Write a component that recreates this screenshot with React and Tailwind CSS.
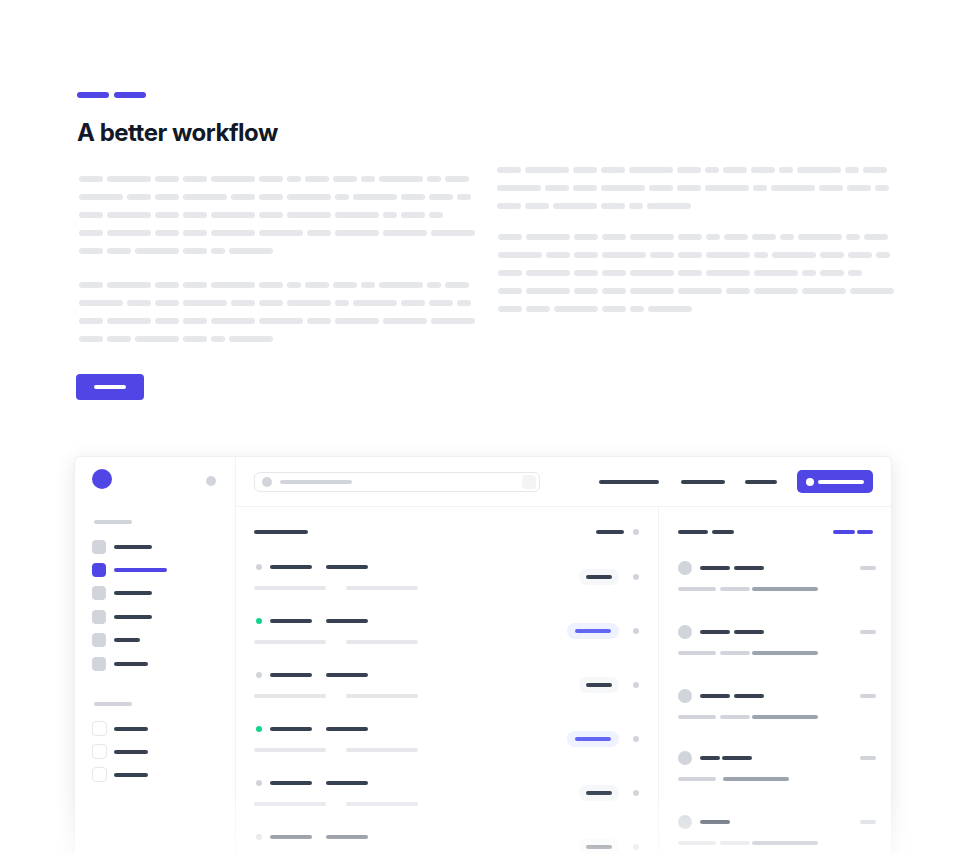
// Feature section: heading, skeleton copy and an app preview card.

const W = { 14: 'w-[14px]', 24: 'w-[24px]', 44: 'w-[44px]' }

const LINES = {
  a: [24, 44, 24, 24, 44, 24, 14, 24, 24, 14, 44, 14, 24],
  b: [44, 24, 24, 44, 24, 24, 44, 14, 44, 24, 24, 14],
  c: [24, 44, 24, 24, 44, 24, 44, 44, 14, 24, 14],
  d: [24, 44, 24, 24, 44, 44, 24, 44, 44, 44],
  e: [24, 24, 44, 24, 14, 44],
}

function Paragraph({ rows }) {
  return (
    <div className="flex flex-col gap-[12px]">
      {rows.map((r, i) => (
        <div key={i} className="flex gap-[4px]">
          {LINES[r].map((w, j) => (
            <span key={j} className={`${W[w]} h-[6px] rounded-full bg-[#e5e7eb]`} />
          ))}
        </div>
      ))}
    </div>
  )
}

const NAV = [
  { bar: 'w-[38px]' },
  { bar: 'w-[53px]', active: true },
  { bar: 'w-[38px]' },
  { bar: 'w-[38px]' },
  { bar: 'w-[26px]' },
  { bar: 'w-[34px]' },
]

function Sidebar() {
  return (
    <div className="w-[161px] shrink-0 border-r border-[#f1f2f4] pl-[17px] pr-[19px] pt-[12px]">
      <div className="flex items-start justify-between">
        <span className="size-[20px] rounded-full bg-[#4f46e5]" />
        <span className="mt-[7px] size-[10px] rounded-full bg-[#d1d5db]" />
      </div>

      <div className="ml-[2px] mt-[31px] h-[4px] w-[38px] rounded-full bg-[#d1d5db]" />
      <div className="mt-[11px] flex flex-col">
        {NAV.map((n, i) => (
          <div key={i} className="flex h-[23.4px] items-center gap-[8px]">
            <span className={n.active ? 'size-[14px] rounded-[4px] bg-[#4f46e5]' : 'size-[14px] rounded-[4px] bg-[#d1d5db]'} />
            <span className={`${n.bar} h-[4px] rounded-full ${n.active ? 'bg-[#4f46e5]' : 'bg-[#374151]'}`} />
          </div>
        ))}
      </div>

      <div className="ml-[2px] mt-[27px] h-[4px] w-[38px] rounded-full bg-[#d1d5db]" />
      <div className="mt-[11px] flex flex-col">
        {[0, 1, 2].map((i) => (
          <div key={i} className="flex h-[23px] items-center gap-[7px]">
            <span className="size-[15px] rounded-[4px] border-[1.5px] border-[#e5e7eb]" />
            <span className="h-[4px] w-[34px] rounded-full bg-[#374151]" />
          </div>
        ))}
      </div>
    </div>
  )
}

function Header() {
  return (
    <div className="flex h-[50px] shrink-0 items-center border-b border-[#f1f2f4] pl-[18px] pr-[18px]">
      <div className="flex h-[20px] w-[286px] items-center rounded-[6px] border border-[#e5e7eb] pl-[7px] pr-[3px]">
        <span className="size-[10px] rounded-full bg-[#d1d5db]" />
        <span className="ml-[8px] h-[4px] w-[72px] rounded-full bg-[#d1d5db]" />
        <span className="ml-auto size-[14px] rounded-[4px] bg-[#f3f4f6]" />
      </div>
      <div className="ml-auto flex items-center">
        <span className="h-[4px] w-[60px] rounded-full bg-[#374151]" />
        <span className="ml-[22px] h-[4px] w-[44px] rounded-full bg-[#374151]" />
        <span className="ml-[20px] h-[4px] w-[32px] rounded-full bg-[#374151]" />
        <div className="ml-[20px] flex h-[23px] w-[76px] items-center rounded-[5px] bg-[#4f46e5] pl-[9px]">
          <span className="size-[8px] rounded-full bg-white" />
          <span className="ml-[4px] h-[4px] w-[46px] rounded-full bg-white" />
        </div>
      </div>
    </div>
  )
}

const ROWS = [false, true, false, true, false, false]

function ListRow({ live }) {
  return (
    <div className="flex items-center justify-between">
      <div className="flex flex-col">
        <div className="flex h-[6px] items-center">
          <span className={live ? 'ml-[2px] size-[6px] rounded-full bg-[#10d48e]' : 'ml-[2px] size-[6px] rounded-full bg-[#d1d5db]'} />
          <span className="ml-[8px] h-[4px] w-[42px] rounded-full bg-[#374151]" />
          <span className="ml-[14px] h-[4px] w-[42px] rounded-full bg-[#374151]" />
        </div>
        <div className="mt-[16px] flex gap-[20px]">
          <span className="h-[4px] w-[72px] rounded-full bg-[#e5e7eb]" />
          <span className="h-[4px] w-[72px] rounded-full bg-[#e5e7eb]" />
        </div>
      </div>
      <div className="flex items-center gap-[14px]">
        {live ? (
          <div className="flex h-[16px] items-center rounded-full bg-[#eef2ff] px-[8px]">
            <span className="h-[4px] w-[36px] rounded-full bg-[#6366f1]" />
          </div>
        ) : (
          <div className="flex h-[16px] items-center rounded-full bg-[#f6f7f9] px-[7px]">
            <span className="h-[4px] w-[26px] rounded-full bg-[#374151]" />
          </div>
        )}
        <span className="size-[6px] rounded-full bg-[#d1d5db]" />
      </div>
    </div>
  )
}

function List() {
  return (
    <div className="w-[423px] shrink-0 border-r border-[#f1f2f4] pl-[18px] pr-[19px] pt-[22px]">
      <div className="flex h-[6px] items-center justify-between">
        <span className="h-[4px] w-[54px] rounded-full bg-[#374151]" />
        <div className="flex items-center gap-[9px]">
          <span className="h-[4px] w-[28px] rounded-full bg-[#374151]" />
          <span className="size-[6px] rounded-full bg-[#d1d5db]" />
        </div>
      </div>
      <div className="mt-[29px] flex flex-col gap-[28px]">
        {ROWS.map((live, i) => (
          <ListRow key={i} live={live} />
        ))}
      </div>
    </div>
  )
}

function Activity({ kind }) {
  return (
    <div className="flex flex-col">
      <div className="flex h-[14px] items-center">
        <span className="size-[14px] rounded-full bg-[#d1d5db]" />
        {kind === 'short' && (
          <>
            <span className="ml-[8px] h-[4px] w-[20px] rounded-full bg-[#374151]" />
            <span className="ml-[2px] h-[4px] w-[30px] rounded-full bg-[#374151]" />
          </>
        )}
        {kind === 'single' && <span className="ml-[8px] h-[4px] w-[30px] rounded-full bg-[#374151]" />}
        {!kind && (
          <>
            <span className="ml-[8px] h-[4px] w-[30px] rounded-full bg-[#374151]" />
            <span className="ml-[4px] h-[4px] w-[30px] rounded-full bg-[#374151]" />
          </>
        )}
        <span className="-mr-[3px] ml-auto h-[4px] w-[16px] rounded-full bg-[#d1d5db]" />
      </div>
      <div className="mt-[12px] flex">
        <span className="h-[4px] w-[38px] rounded-full bg-[#d1d5db]" />
        {kind === 'short' ? (
          <span className="ml-[7px] h-[4px] w-[66px] rounded-full bg-[#9ca3af]" />
        ) : (
          <>
            <span className="ml-[4px] h-[4px] w-[30px] rounded-full bg-[#d1d5db]" />
            <span className="ml-[2px] h-[4px] w-[66px] rounded-full bg-[#9ca3af]" />
          </>
        )}
      </div>
    </div>
  )
}

function Panel() {
  return (
    <div className="flex-1 pl-[19px] pr-[18px] pt-[22px]">
      <div className="flex h-[6px] items-center justify-between">
        <div className="flex gap-[4px]">
          <span className="h-[4px] w-[30px] rounded-full bg-[#374151]" />
          <span className="h-[4px] w-[22px] rounded-full bg-[#374151]" />
        </div>
        <div className="flex gap-[2px]">
          <span className="h-[4px] w-[22px] rounded-full bg-[#4f46e5]" />
          <span className="h-[4px] w-[16px] rounded-full bg-[#4f46e5]" />
        </div>
      </div>
      <div className="mt-[26px] flex flex-col">
        <Activity />
        <div className="mt-[34px]"><Activity /></div>
        <div className="mt-[34px]"><Activity /></div>
        <div className="mt-[32px]"><Activity kind="short" /></div>
        <div className="mt-[34px]"><Activity kind="single" /></div>
      </div>
    </div>
  )
}

export default function App() {
  return (
    <div className="relative h-[854px] w-full overflow-hidden bg-white font-['Inter',sans-serif]">
      <div className="pl-[77px] pt-[92px]">
        <div className="flex gap-[5px]">
          <span className="h-[6px] w-[32px] rounded-full bg-[#4f46e5]" />
          <span className="h-[6px] w-[32px] rounded-full bg-[#4f46e5]" />
        </div>
        <h2 className="mt-[19px] text-[24px] font-bold leading-[32px] tracking-[-0.02em] text-[#111827]">
          A better workflow
        </h2>

        <div className="flex items-start">
          <div className="mt-[27px] w-[420px] shrink-0 pl-[2px]">
            <Paragraph rows={['a', 'b', 'c', 'd', 'e']} />
            <div className="mt-[28px]">
              <Paragraph rows={['a', 'b', 'd', 'e']} />
            </div>
          </div>
          <div className="mt-[18px]">
            <Paragraph rows={['a', 'b', 'e']} />
            <div className="ml-[1px] mt-[25px]">
              <Paragraph rows={['a', 'b', 'c', 'd', 'e']} />
            </div>
          </div>
        </div>

        <button className="-ml-[1px] mt-[32px] flex h-[26px] w-[68px] items-center justify-center rounded-[4px] bg-[#4f46e5]">
          <span className="h-[4px] w-[32px] rounded-full bg-white" />
        </button>
      </div>

      <div className="ml-[74px] mt-[56px] flex h-[440px] w-[818px] overflow-hidden rounded-[6px] border border-[#eeeff1] bg-white shadow-[0_4px_20px_rgba(0,0,0,0.1)]">
        <Sidebar />
        <div className="flex flex-1 flex-col">
          <Header />
          <div className="flex flex-1">
            <List />
            <Panel />
          </div>
        </div>
      </div>

      <div className="pointer-events-none absolute left-0 right-0 top-[790px] h-[90px] bg-linear-to-b from-white/0 to-white" />
    </div>
  )
}
